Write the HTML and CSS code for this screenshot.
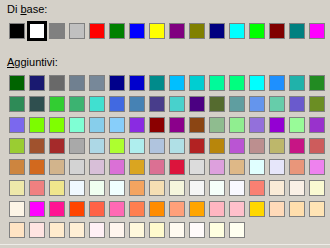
FILE: index.html
```html
<!DOCTYPE html>
<html lang="it">
<head>
<meta charset="utf-8">
<title>Colori</title>
<link rel="stylesheet" href="styles.css">
</head>
<body>
<div class="panel">
  <div class="label label-base">Di <u>b</u>ase:</div>
  <div class="grid base">
    <span class="sw" style="background:#000000"></span>
    <span class="sw selected" style="background:#ffffff"></span>
    <span class="sw" style="background:#808080"></span>
    <span class="sw" style="background:#c0c0c0"></span>
    <span class="sw" style="background:#ff0000"></span>
    <span class="sw" style="background:#008000"></span>
    <span class="sw" style="background:#0000ff"></span>
    <span class="sw" style="background:#ffff00"></span>
    <span class="sw" style="background:#800080"></span>
    <span class="sw" style="background:#808000"></span>
    <span class="sw" style="background:#000080"></span>
    <span class="sw" style="background:#00ffff"></span>
    <span class="sw" style="background:#00ff00"></span>
    <span class="sw" style="background:#800000"></span>
    <span class="sw" style="background:#008080"></span>
    <span class="sw" style="background:#ff00ff"></span>
  </div>
  <div class="label label-extra"><u>A</u>ggiuntivi:</div>
  <div class="grid extra">
    <span class="sw" style="background:#006400"></span>
    <span class="sw" style="background:#191970"></span>
    <span class="sw" style="background:#696969"></span>
    <span class="sw" style="background:#708090"></span>
    <span class="sw" style="background:#778899"></span>
    <span class="sw" style="background:#00008b"></span>
    <span class="sw" style="background:#0000cd"></span>
    <span class="sw" style="background:#008b8b"></span>
    <span class="sw" style="background:#00bfff"></span>
    <span class="sw" style="background:#00ced1"></span>
    <span class="sw" style="background:#00fa9a"></span>
    <span class="sw" style="background:#00ff7f"></span>
    <span class="sw" style="background:#00ffff"></span>
    <span class="sw" style="background:#1e90ff"></span>
    <span class="sw" style="background:#20b2aa"></span>
    <span class="sw" style="background:#228b22"></span>

    <span class="sw" style="background:#2e8b57"></span>
    <span class="sw" style="background:#2f4f4f"></span>
    <span class="sw" style="background:#32cd32"></span>
    <span class="sw" style="background:#3cb371"></span>
    <span class="sw" style="background:#40e0d0"></span>
    <span class="sw" style="background:#4169e1"></span>
    <span class="sw" style="background:#4682b4"></span>
    <span class="sw" style="background:#483d8b"></span>
    <span class="sw" style="background:#48d1cc"></span>
    <span class="sw" style="background:#4b0082"></span>
    <span class="sw" style="background:#556b2f"></span>
    <span class="sw" style="background:#5f9ea0"></span>
    <span class="sw" style="background:#6495ed"></span>
    <span class="sw" style="background:#66cdaa"></span>
    <span class="sw" style="background:#6a5acd"></span>
    <span class="sw" style="background:#6b8e23"></span>

    <span class="sw" style="background:#7b68ee"></span>
    <span class="sw" style="background:#7cfc00"></span>
    <span class="sw" style="background:#7fff00"></span>
    <span class="sw" style="background:#7fffd4"></span>
    <span class="sw" style="background:#87ceeb"></span>
    <span class="sw" style="background:#87cefa"></span>
    <span class="sw" style="background:#8a2be2"></span>
    <span class="sw" style="background:#8b0000"></span>
    <span class="sw" style="background:#8b008b"></span>
    <span class="sw" style="background:#8b4513"></span>
    <span class="sw" style="background:#8fbc8f"></span>
    <span class="sw" style="background:#90ee90"></span>
    <span class="sw" style="background:#9370db"></span>
    <span class="sw" style="background:#9400d3"></span>
    <span class="sw" style="background:#98fb98"></span>
    <span class="sw" style="background:#9932cc"></span>

    <span class="sw" style="background:#9acd32"></span>
    <span class="sw" style="background:#a0522d"></span>
    <span class="sw" style="background:#a52a2a"></span>
    <span class="sw" style="background:#a9a9a9"></span>
    <span class="sw" style="background:#add8e6"></span>
    <span class="sw" style="background:#adff2f"></span>
    <span class="sw" style="background:#afeeee"></span>
    <span class="sw" style="background:#b0c4de"></span>
    <span class="sw" style="background:#b0e0e6"></span>
    <span class="sw" style="background:#b22222"></span>
    <span class="sw" style="background:#b8860b"></span>
    <span class="sw" style="background:#ba55d3"></span>
    <span class="sw" style="background:#bc8f8f"></span>
    <span class="sw" style="background:#bdb76b"></span>
    <span class="sw" style="background:#c71585"></span>
    <span class="sw" style="background:#cd5c5c"></span>

    <span class="sw" style="background:#cd853f"></span>
    <span class="sw" style="background:#d2691e"></span>
    <span class="sw" style="background:#d2b48c"></span>
    <span class="sw" style="background:#d3d3d3"></span>
    <span class="sw" style="background:#d8bfd8"></span>
    <span class="sw" style="background:#da70d6"></span>
    <span class="sw" style="background:#daa520"></span>
    <span class="sw" style="background:#db7093"></span>
    <span class="sw" style="background:#dc143c"></span>
    <span class="sw" style="background:#dcdcdc"></span>
    <span class="sw" style="background:#dda0dd"></span>
    <span class="sw" style="background:#deb887"></span>
    <span class="sw" style="background:#e0ffff"></span>
    <span class="sw" style="background:#e6e6fa"></span>
    <span class="sw" style="background:#e9967a"></span>
    <span class="sw" style="background:#ee82ee"></span>

    <span class="sw" style="background:#eee8aa"></span>
    <span class="sw" style="background:#f08080"></span>
    <span class="sw" style="background:#f0e68c"></span>
    <span class="sw" style="background:#f0f8ff"></span>
    <span class="sw" style="background:#f0fff0"></span>
    <span class="sw" style="background:#f0ffff"></span>
    <span class="sw" style="background:#f4a460"></span>
    <span class="sw" style="background:#f5deb3"></span>
    <span class="sw" style="background:#f5f5dc"></span>
    <span class="sw" style="background:#f5f5f5"></span>
    <span class="sw" style="background:#f5fffa"></span>
    <span class="sw" style="background:#f8f8ff"></span>
    <span class="sw" style="background:#fa8072"></span>
    <span class="sw" style="background:#faebd7"></span>
    <span class="sw" style="background:#faf0e6"></span>
    <span class="sw" style="background:#fafad2"></span>

    <span class="sw" style="background:#fdf5e6"></span>
    <span class="sw" style="background:#ff00ff"></span>
    <span class="sw" style="background:#ff1493"></span>
    <span class="sw" style="background:#ff4500"></span>
    <span class="sw" style="background:#ff6347"></span>
    <span class="sw" style="background:#ff69b4"></span>
    <span class="sw" style="background:#ff7f50"></span>
    <span class="sw" style="background:#ff8c00"></span>
    <span class="sw" style="background:#ffa07a"></span>
    <span class="sw" style="background:#ffa500"></span>
    <span class="sw" style="background:#ffb6c1"></span>
    <span class="sw" style="background:#ffc0cb"></span>
    <span class="sw" style="background:#ffd700"></span>
    <span class="sw" style="background:#ffdab9"></span>
    <span class="sw" style="background:#ffdead"></span>
    <span class="sw" style="background:#ffe4b5"></span>

    <span class="sw" style="background:#ffe4c4"></span>
    <span class="sw" style="background:#ffe4e1"></span>
    <span class="sw" style="background:#ffebcd"></span>
    <span class="sw" style="background:#ffefd5"></span>
    <span class="sw" style="background:#fff0f5"></span>
    <span class="sw" style="background:#fff5ee"></span>
    <span class="sw" style="background:#fff8dc"></span>
    <span class="sw" style="background:#fffacd"></span>
    <span class="sw" style="background:#fffaf0"></span>
    <span class="sw" style="background:#fffafa"></span>
    <span class="sw" style="background:#ffffe0"></span>
    <span class="sw" style="background:#fffff0"></span>
  </div>
</div>
</body>
</html>
```

FILE: styles.css
```css
html, body {
  margin: 0;
  padding: 0;
  background: #d4d0c8;
}

body {
  font-family: "Liberation Sans", Arial, sans-serif;
  font-size: 11px;
  color: #000;
  width: 330px;
  height: 248px;
  overflow: hidden;
}

.panel {
  box-sizing: border-box;
  width: 330px;
  height: 245px;
  padding: 3px 0 0 0;
  border-bottom: 1px solid #eeece8;
}

.label {
  line-height: 13px;
  height: 13px;
  padding-left: 7px;
  white-space: nowrap;
}

.label-extra {
  margin-top: 17px;
}

.grid {
  display: grid;
  grid-template-columns: repeat(16, 16px);
  grid-auto-rows: 16px;
  column-gap: 4px;
  row-gap: 5px;
  padding-left: 9px;
}

.base {
  margin-top: 7px;
}

.extra {
  margin-top: 6px;
}

.sw {
  display: block;
  box-sizing: border-box;
  width: 16px;
  height: 16px;
  border: 1px solid #808080;
}

.sw.selected {
  border-color: #000;
  outline: 2px solid #000;
}
```
